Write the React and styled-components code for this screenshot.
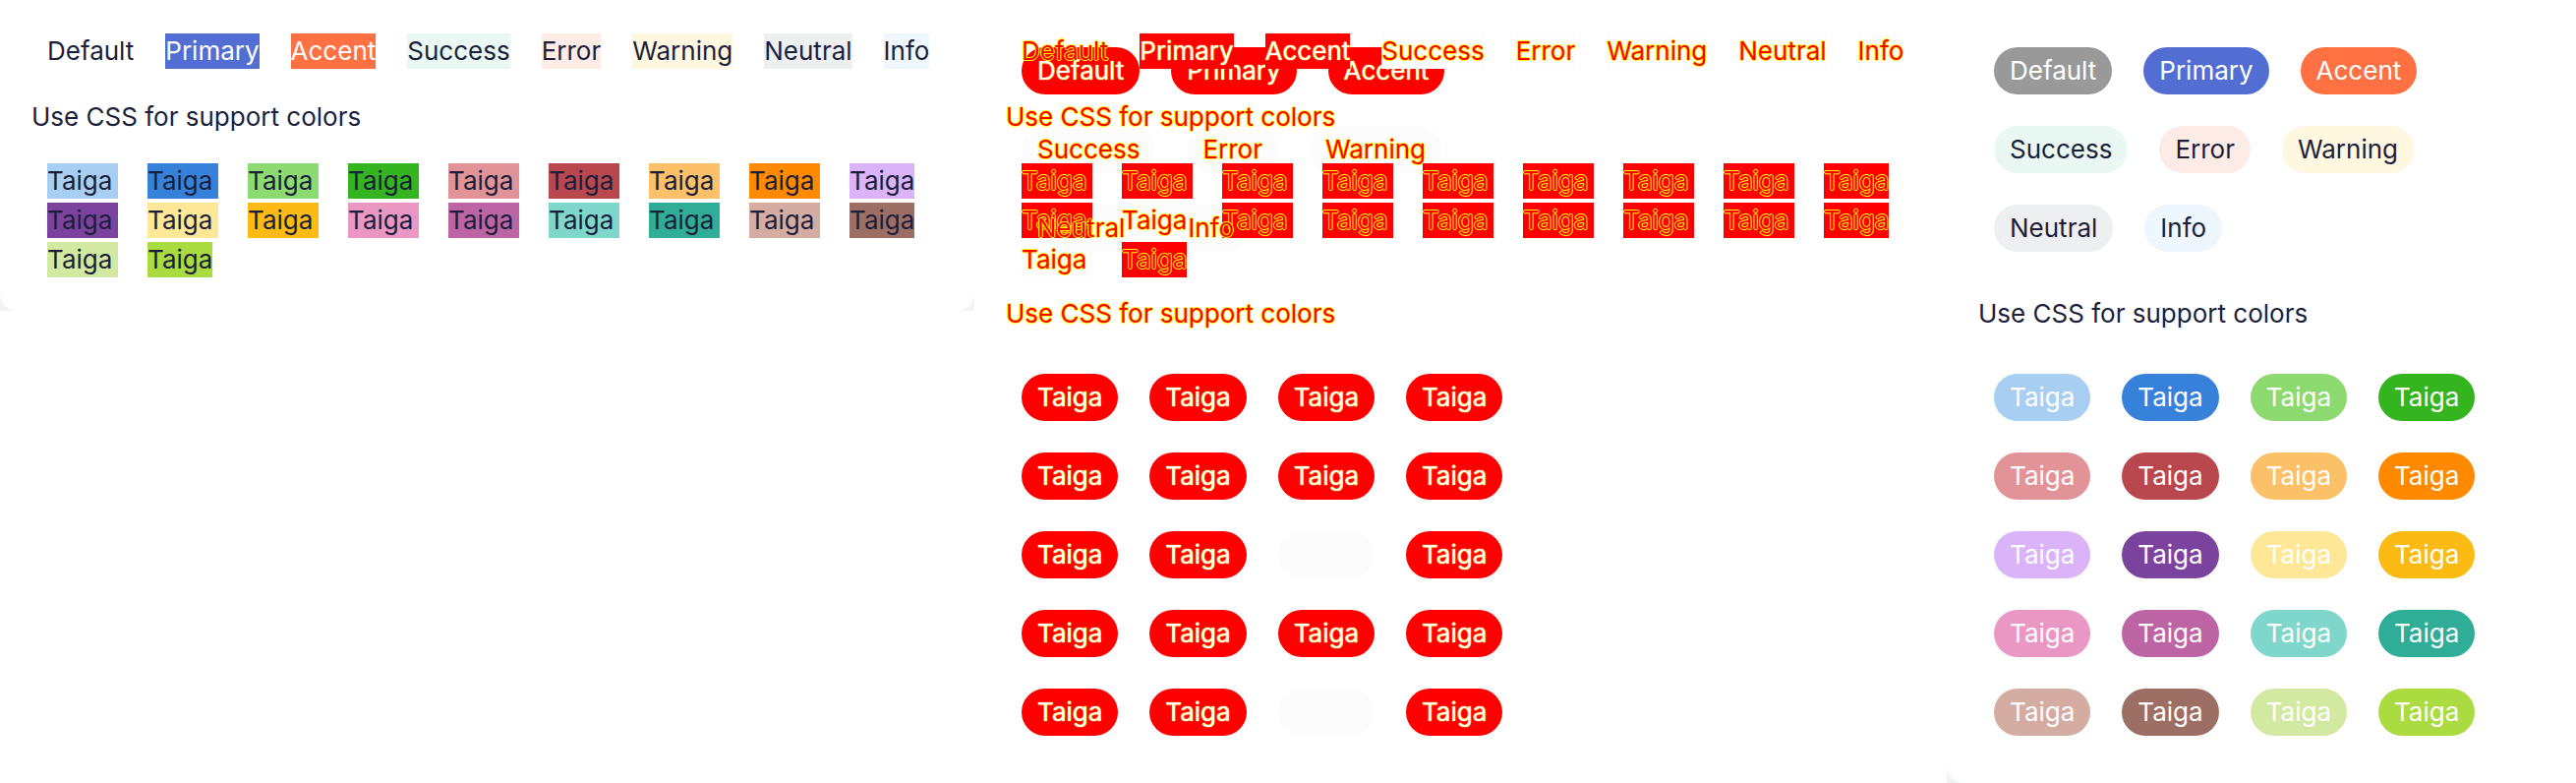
import React from 'react';
import styled, { createGlobalStyle, css } from 'styled-components';

const INK = '#1b1f3b';
const WHITE = '#ffffff';
const RED = '#ff0000';
const YELLOW = '#ffff00';
const FAINT = '#fcfcfc';
const PAGE = '#f2f3f5';

const GlobalStyle = createGlobalStyle`
  html, body {
    margin: 0;
    padding: 0;
    background: #fff;
  }
  body {
    font-family: Inter, "Noto Sans", sans-serif;
    color: ${INK};
    -webkit-font-smoothing: antialiased;
  }
`;

const STATUSES = [
  { label: 'Default', box: null, boxText: INK, pill: '#999999', pillText: WHITE },
  { label: 'Primary', box: '#526ed3', boxText: WHITE, pill: '#526ed3', pillText: WHITE },
  { label: 'Accent', box: '#ff7043', boxText: WHITE, pill: '#ff7043', pillText: WHITE },
  { label: 'Success', box: '#e9f8f2', boxText: INK, pill: '#e9f8f2', pillText: INK, light: true },
  { label: 'Error', box: '#fdebe5', boxText: INK, pill: '#fdebe5', pillText: INK, light: true },
  { label: 'Warning', box: '#fff7e0', boxText: INK, pill: '#fff7e0', pillText: INK, light: true },
  { label: 'Neutral', box: '#eeeff1', boxText: INK, pill: '#eeeff1', pillText: INK, light: true },
  { label: 'Info', box: '#eef6fe', boxText: INK, pill: '#eef6fe', pillText: INK, light: true },
];

const SUPPORT = [
  '#a8cef1', '#3682db', '#8dda71', '#34b41f', '#e29398',
  '#b8474e', '#fcc068', '#ff8a00', '#dab3f9', '#7b439e',
  '#fee797', '#fcbb14', '#ea97c4', '#bd65a4', '#7fd7cc',
  '#2fad96', '#d4aca2', '#9d6f64', '#d2e9a2', '#aadc42',
];
const LIGHT_SUPPORT = ['#fee797', '#d2e9a2'];
// badges that end a line in the broken layout lose their trailing space
const LINE_ENDS = [8, 17, 19];

// how a fill and its text look in the real shots and in the diff layers
const paint = (mode, bg, fg, light) => {
  if (mode === 'real') return { bg: bg || 'transparent', fg, glow: null };
  const fill = !bg ? 'transparent' : light ? FAINT : RED;
  const isWhite = fg === WHITE;
  if (mode === 'diff') return { bg: fill, fg: isWhite ? WHITE : RED, glow: isWhite ? 'soft' : 'hard' };
  if (mode === 'fill') {
    // white text on a pale pill matches the white page, so it does not show
    const shows = isWhite && !light;
    return { bg: fill, fg: shows ? WHITE : 'transparent', glow: shows ? 'soft' : null };
  }
  return { bg: 'transparent', fg: isWhite ? 'transparent' : RED, glow: isWhite ? null : 'hard' };
};

const glow = css`
  ${(p) =>
    p.$glow === 'hard' &&
    css`
      text-shadow: 1px 0 ${YELLOW}, -1px 0 ${YELLOW}, 0 1px ${YELLOW}, 0 -1px ${YELLOW};
    `}
  ${(p) =>
    p.$glow === 'soft' &&
    css`
      text-shadow: 0 0 1px ${YELLOW}, 0 0 1px ${YELLOW};
    `}
`;

const Strip = styled.div`
  display: flex;
  width: 2620px;
  height: 796px;
  overflow: hidden;
  background: #fff;
`;

const Shot = styled.div`
  flex: none;
  display: flex;
  width: ${(p) => p.$w}px;
  height: ${(p) => p.$h}px;
  background: ${PAGE};
  overflow: hidden;
`;

const Card = styled.div`
  flex: 1;
  background: #fff;
  border-radius: ${(p) => p.$radius};
`;

const DiffShot = styled.div`
  flex: none;
  display: grid;
  width: 989px;
  height: 796px;
  background: #fff;
  overflow: hidden;

  & > * {
    grid-area: 1 / 1;
  }
`;

const Sheet = styled.div`
  padding: ${(p) => p.$top}px 0 0 32px;
  font-size: 26px;
`;

const Title = styled.div`
  margin-top: ${(p) => p.$gap}px;
  height: 36px;
  line-height: 36px;
  white-space: nowrap;
  color: ${(p) => p.$fg};
  ${glow}
`;

/* broken badges: bare inline boxes */
const TagRow = styled.div`
  display: flex;
  gap: 32px;
  margin-left: 16px;
`;

const TagGrid = styled.div`
  display: grid;
  grid-template-columns: repeat(9, 70px);
  column-gap: 32px;
  row-gap: 4px;
  justify-items: start;
  margin: 29px 0 0 16px;
`;

const Tag = styled.span`
  display: block;
  height: 36px;
  line-height: 36px;
  padding-right: ${(p) => (p.$trail ? '6px' : '0')};
  white-space: nowrap;
  background: ${(p) => p.$bg};
  color: ${(p) => p.$fg};
  ${glow}
`;

/* proper badges: rounded pills */
const PillWrap = styled.div`
  display: flex;
  flex-wrap: wrap;
  gap: 32px;
  width: 540px;
  margin-left: 16px;
`;

const PillGrid = styled.div`
  display: grid;
  grid-template-columns: repeat(4, max-content);
  gap: 32px;
  margin: 43px 0 0 16px;
`;

const Pill = styled.span`
  display: block;
  height: 48px;
  line-height: 48px;
  padding: 0 16px;
  border-radius: 24px;
  white-space: nowrap;
  background: ${(p) => p.$bg};
  color: ${(p) => p.$fg};
  ${glow}
`;

function Broken({ mode }) {
  const head = paint(mode, null, INK);
  return (
    <Sheet $top={34}>
      <TagRow>
        {STATUSES.map((s) => {
          const c = paint(mode, s.box, s.boxText, s.light);
          return (
            <Tag key={s.label} $bg={c.bg} $fg={c.fg} $glow={c.glow}>
              {s.label}
            </Tag>
          );
        })}
      </TagRow>
      <Title $gap={31} $fg={head.fg} $glow={head.glow}>Use CSS for support colors</Title>
      <TagGrid>
        {SUPPORT.map((color, i) => {
          const c = paint(mode, color, INK, LIGHT_SUPPORT.includes(color));
          return (
            <Tag key={i} $trail={!LINE_ENDS.includes(i)} $bg={c.bg} $fg={c.fg} $glow={c.glow}>
              Taiga
            </Tag>
          );
        })}
      </TagGrid>
    </Sheet>
  );
}

function Expected({ mode }) {
  const head = paint(mode, null, INK);
  return (
    <Sheet $top={48}>
      <PillWrap>
        {STATUSES.map((s) => {
          const c = paint(mode, s.pill, s.pillText, s.light);
          return (
            <Pill key={s.label} $bg={c.bg} $fg={c.fg} $glow={c.glow}>
              {s.label}
            </Pill>
          );
        })}
      </PillWrap>
      <Title $gap={45} $fg={head.fg} $glow={head.glow}>Use CSS for support colors</Title>
      <PillGrid>
        {SUPPORT.map((color, i) => {
          const c = paint(mode, color, WHITE, LIGHT_SUPPORT.includes(color));
          return (
            <Pill key={i} $bg={c.bg} $fg={c.fg} $glow={c.glow}>
              Taiga
            </Pill>
          );
        })}
      </PillGrid>
    </Sheet>
  );
}

export default function App() {
  return (
    <>
      <GlobalStyle />
      <Strip>
        <Shot $w={991} $h={316}>
          <Card $radius="0 0 18px 18px">
            <Broken mode="real" />
          </Card>
        </Shot>
        <DiffShot>
          <Expected mode="fill" />
          <Broken mode="diff" />
          <Expected mode="ink" />
        </DiffShot>
        <Shot $w={640} $h={796}>
          <Card $radius="0 0 0 18px">
            <Expected mode="real" />
          </Card>
        </Shot>
      </Strip>
    </>
  );
}
